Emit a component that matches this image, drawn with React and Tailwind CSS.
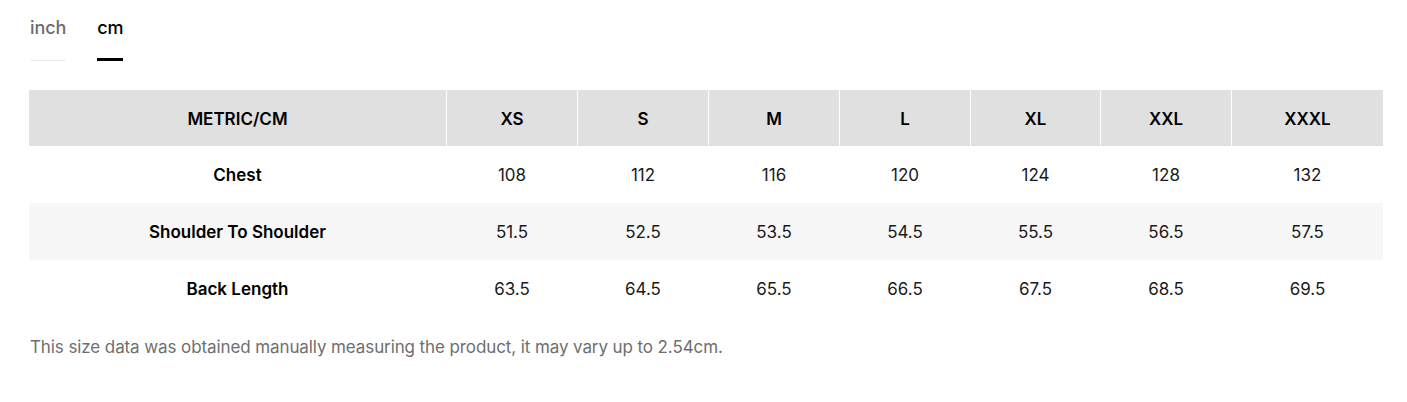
import React, { useState } from "react";

const sizes = ["XS", "S", "M", "L", "XL", "XXL", "XXXL"];

const rows = [
  { label: "Chest", values: ["108", "112", "116", "120", "124", "128", "132"] },
  { label: "Shoulder To Shoulder", values: ["51.5", "52.5", "53.5", "54.5", "55.5", "56.5", "57.5"] },
  { label: "Back Length", values: ["63.5", "64.5", "65.5", "66.5", "67.5", "68.5", "69.5"] },
];

const cols = "grid grid-cols-[417px_131px_131px_131px_131px_130px_131px_1fr]";

export default function App() {
  const [unit, setUnit] = useState("cm");

  return (
    <div className="w-[1407px] h-[402px] bg-white font-['Inter',sans-serif] text-black">
      <div className="flex gap-[31px] pl-[30px] pt-[18px]">
        {["inch", "cm"].map((u) => (
          <button
            key={u}
            onClick={() => setUnit(u)}
            className={`flex flex-col items-start text-[18px] leading-[20px] font-medium ${
              unit === u ? "text-black" : "text-[#6b6b6b]"
            }`}
          >
            <span className="tracking-[-0.1px]">{u}</span>
            <span
              className={`mt-[20px] w-full ${
                unit === u ? "h-[3px] bg-black" : "h-px bg-[#ececec] mt-[22px]"
              }`}
            ></span>
          </button>
        ))}
      </div>

      <div className="mx-[29px] mt-[29px] w-[1354px]">
        <div className={`${cols} h-[56px] bg-[#e0e0e0] text-[17px] font-semibold`}>
          <div className="flex items-center justify-center pt-[3px]">METRIC/CM</div>
          {sizes.map((s) => (
            <div key={s} className="flex items-center justify-center border-l border-white pt-[3px]">
              {s}
            </div>
          ))}
        </div>
        {rows.map((r, i) => (
          <div
            key={r.label}
            className={`${cols} ${i === 2 ? "h-[56px]" : "h-[57px]"} pt-[3px] ${
              i === 1 ? "bg-[#f7f7f7]" : "bg-white"
            } text-[17px]`}
          >
            <div className="flex items-center justify-center font-semibold">{r.label}</div>
            {r.values.map((v, j) => (
              <div key={j} className="flex items-center justify-center pl-px text-[#1a1a1a]">
                {v}
              </div>
            ))}
          </div>
        ))}
      </div>

      <p className="pl-[30px] mt-[21px] text-[17px] leading-[20px] text-[#6e6e6e] tracking-[-0.1px]">
        This size data was obtained manually measuring the product, it may vary up to 2.54cm.
      </p>
    </div>
  );
}
